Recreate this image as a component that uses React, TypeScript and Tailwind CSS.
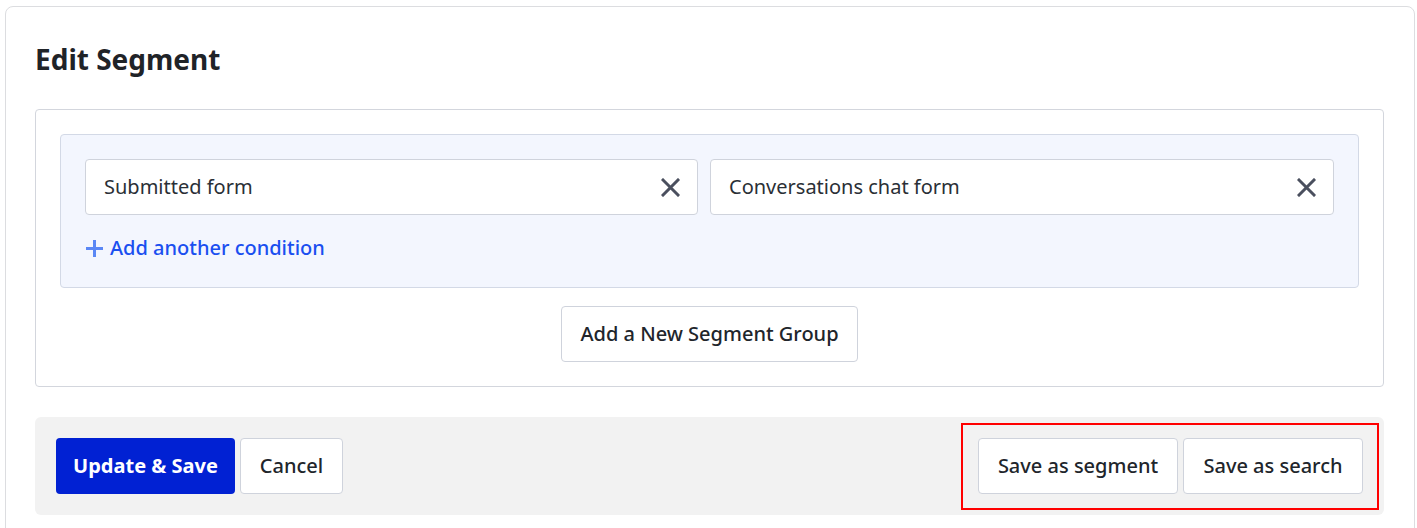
import React from 'react'

function XIcon() {
  return (
    <svg width="19" height="19" viewBox="0 0 19 19" className="shrink-0">
      <path d="M2 2 L17 17 M17 2 L2 17" stroke="#4a4f5e" strokeWidth="3" strokeLinecap="square" />
    </svg>
  )
}

function PlusIcon() {
  return (
    <svg width="19" height="19" viewBox="0 0 19 19" className="shrink-0">
      <path d="M9.5 1 V18 M1 9.5 H18" stroke="#5a87f5" strokeWidth="3" />
    </svg>
  )
}

function Condition({ label, className }: { label: string; className: string }) {
  return (
    <div
      className={`flex h-[56px] items-center justify-between rounded border border-[#cfd3dc] bg-white pl-[18px] pr-[17px] ${className}`}
    >
      <span className="text-[20px] text-[#2a2f36]">{label}</span>
      <XIcon />
    </div>
  )
}

const btn =
  'h-[56px] rounded border border-[#cfd3dc] bg-white text-center text-[20px] font-medium text-[#21252b]'

export default function App() {
  return (
    <div
      className="min-h-screen bg-white pl-[5px] pt-[6px]"
      style={{ fontFamily: '"Noto Sans", "Open Sans", sans-serif' }}
    >
      <div className="w-[1410px] rounded-lg border border-[#dcdde0] pb-[30px] pl-[29px] pr-[30px] pt-[35px]">
        <h1 className="mb-[33px] text-[28px] font-bold leading-[34px] text-[#1f2328]">Edit Segment</h1>

        <div className="flex flex-col items-center rounded border border-[#d3d6dd] p-[24px]">
          <div className="w-full rounded border border-[#d3d9e6] bg-[#f3f6fe] px-[24px] pb-[25px] pt-[24px]">
            <div className="flex gap-[12px]">
              <Condition label="Submitted form" className="w-[613px] shrink-0" />
              <Condition label="Conversations chat form" className="flex-1" />
            </div>
            <button className="mt-[19px] flex h-[28px] items-center gap-[6px] text-[20px] font-medium text-[#1a4ff0]">
              <PlusIcon />
              Add another condition
            </button>
          </div>
          <button className={`${btn} mt-[18px] w-[297px]`}>Add a New Segment Group</button>
        </div>

        <div className="mt-[30px] flex h-[98px] items-center justify-between rounded-md bg-[#f2f2f2] pl-[21px] pr-[5px]">
          <div className="flex gap-[5px]">
            <button className="h-[56px] w-[179px] rounded bg-[#0121d3] text-center text-[20px] font-bold text-white">
              Update &amp; Save
            </button>
            <button className={`${btn} w-[103px]`}>Cancel</button>
          </div>
          <div className="flex gap-[5px] border-2 border-[#ff0000] pb-[14px] pl-[15px] pr-[14px] pt-[13px]">
            <button className={`${btn} w-[200px]`}>Save as segment</button>
            <button className={`${btn} w-[180px]`}>Save as search</button>
          </div>
        </div>
      </div>
    </div>
  )
}
